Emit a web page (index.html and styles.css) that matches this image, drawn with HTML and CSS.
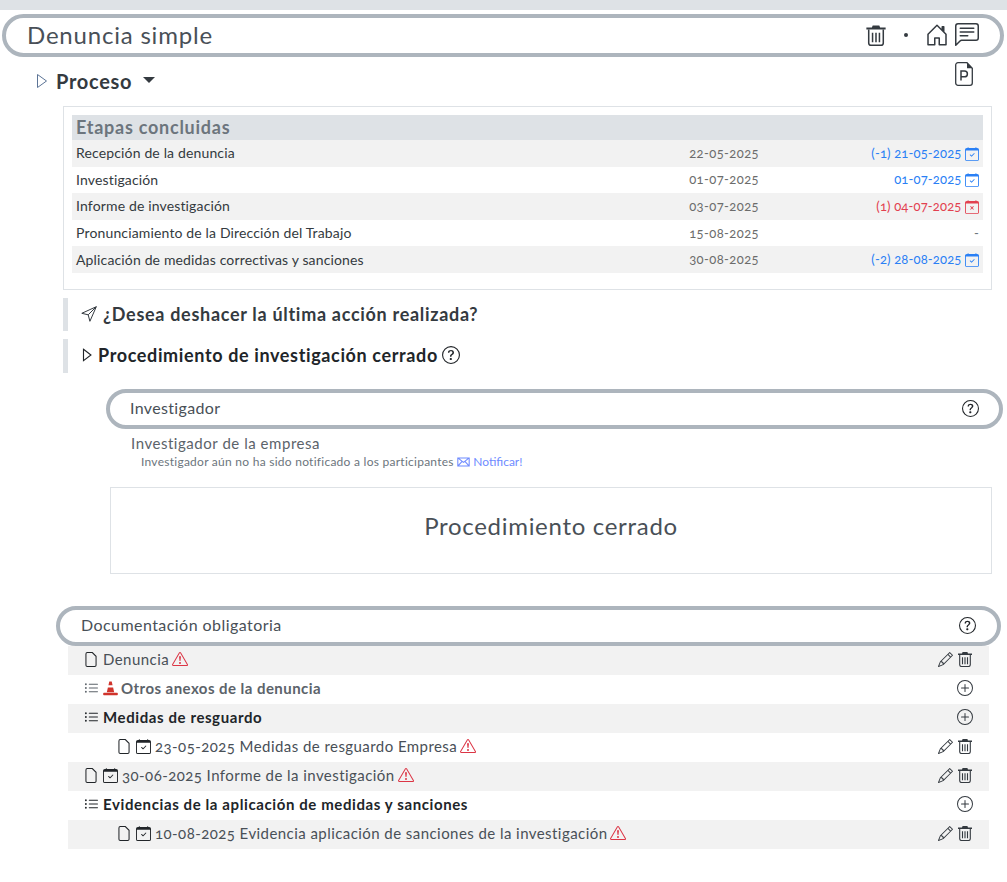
FILE: index.html
```html
<!DOCTYPE html>
<html lang="es">
<head>
    <meta charset="UTF-8">
    <title>Denuncia simple</title>
    <link rel="stylesheet" href="styles.css">
</head>
<body>
    <svg width="0" height="0" class="defs">
        <symbol id="trash" viewBox="0 0 16 16"><path fill="currentColor" d="M1 2.500h14V4H1zM5 2.500l.6-1.500h4.800l.6 1.500z"/><path fill="none" stroke="currentColor" stroke-width="1.100" d="M2.700 4v9.800A1.700 1.700 0 0 0 4.400 15.500h7.200a1.700 1.700 0 0 0 1.700-1.700V4M5.500 6.300v7M8 6.300v7M10.500 6.300v7"/></symbol>
        <symbol id="pencil" viewBox="0 0 16 16"><path fill="currentColor" d="M12.146.146a.5.5 0 0 1 .708 0l3 3a.5.5 0 0 1 0 .708l-10 10a.5.5 0 0 1-.168.11l-5 2a.5.5 0 0 1-.65-.65l2-5a.5.5 0 0 1 .11-.168l10-10zM11.207 2.500 13.500 4.793 14.793 3.500 12.500 1.207 11.207 2.500zm1.586 3L10.500 3.207 4 9.707V10h.5a.5.5 0 0 1 .5.5v.5h.5a.5.5 0 0 1 .5.5v.5h.293l6.500-6.500zm-9.761 5.175-.106.106-1.528 3.821 3.821-1.528.106-.106A.5.5 0 0 1 5 12.500V12h-.5a.5.5 0 0 1-.5-.5V11h-.5a.5.5 0 0 1-.468-.325z"/></symbol>
        <symbol id="plus" viewBox="0 0 16 16"><path fill="currentColor" d="M8 15A7 7 0 1 1 8 1a7 7 0 0 1 0 14zm0 1A8 8 0 1 0 8 0a8 8 0 0 0 0 16z"/><path fill="currentColor" d="M8 4a.5.5 0 0 1 .5.5v3h3a.5.5 0 0 1 0 1h-3v3a.5.5 0 0 1-1 0v-3h-3a.5.5 0 0 1 0-1h3v-3A.5.5 0 0 1 8 4z"/></symbol>
        <symbol id="file" viewBox="2 0 12 16"><path fill="none" stroke="currentColor" stroke-width="1.100" d="M4 .6h5.400l4 4V14a1.400 1.400 0 0 1-1.400 1.400H4A1.400 1.400 0 0 1 2.600 14V2A1.400 1.400 0 0 1 4 .6z"/></symbol>
        <symbol id="warn" viewBox="0 0 16 16"><path fill="currentColor" d="M7.938 2.016A.13.13 0 0 1 8.002 2a.13.13 0 0 1 .063.016.146.146 0 0 1 .054.057l6.857 11.667c.036.06.035.124.002.183a.163.163 0 0 1-.054.06.116.116 0 0 1-.066.017H1.146a.115.115 0 0 1-.066-.017.163.163 0 0 1-.054-.06.176.176 0 0 1 .002-.183L7.884 2.073a.147.147 0 0 1 .054-.057zm1.044-.45a1.130 1.130 0 0 0-1.960 0L.165 13.233c-.457.778.091 1.767.98 1.767h13.713c.889 0 1.438-.99.98-1.767L8.982 1.566z"/><path fill="currentColor" d="M7.002 12a1 1 0 1 1 2 0 1 1 0 0 1-2 0zM7.100 5.995a.905.905 0 1 1 1.800 0l-.35 3.507a.552.552 0 0 1-1.100 0L7.100 5.995z"/></symbol>
        <symbol id="list" viewBox="0 0 16 16"><path fill="currentColor" d="M5 11.500a.5.5 0 0 1 .5-.5h9a.5.5 0 0 1 0 1h-9a.5.5 0 0 1-.5-.5zm0-4a.5.5 0 0 1 .5-.5h9a.5.5 0 0 1 0 1h-9a.5.5 0 0 1-.5-.5zm0-4a.5.5 0 0 1 .5-.5h9a.5.5 0 0 1 0 1h-9a.5.5 0 0 1-.5-.5zm-3 1a1 1 0 1 0 0-2 1 1 0 0 0 0 2zm0 4a1 1 0 1 0 0-2 1 1 0 0 0 0 2zm0 4a1 1 0 1 0 0-2 1 1 0 0 0 0 2z"/></symbol>
        <symbol id="cal" viewBox="0 0 16 16"><path fill="currentColor" d="M10.854 7.146a.5.5 0 0 1 0 .708l-3 3a.5.5 0 0 1-.708 0l-1.500-1.500a.5.5 0 1 1 .708-.708L7.500 9.793l2.646-2.647a.5.5 0 0 1 .708 0z"/><path fill="currentColor" d="M3.500 0a.5.5 0 0 1 .5.5V1h8V.5a.5.5 0 0 1 1 0V1h1a2 2 0 0 1 2 2v11a2 2 0 0 1-2 2H2a2 2 0 0 1-2-2V3a2 2 0 0 1 2-2h1V.5a.5.5 0 0 1 .5-.5zM1 4v10a1 1 0 0 0 1 1h12a1 1 0 0 0 1-1V4H1z"/></symbol>
        <symbol id="calx" viewBox="0 0 16 16"><path fill="currentColor" d="M6.146 7.146a.5.5 0 0 1 .708 0L8 8.293l1.146-1.147a.5.5 0 1 1 .708.708L8.707 9l1.147 1.146a.5.5 0 0 1-.708.708L8 9.707l-1.146 1.147a.5.5 0 0 1-.708-.708L7.293 9 6.146 7.854a.5.5 0 0 1 0-.708z"/><path fill="currentColor" d="M3.500 0a.5.5 0 0 1 .5.5V1h8V.5a.5.5 0 0 1 1 0V1h1a2 2 0 0 1 2 2v11a2 2 0 0 1-2 2H2a2 2 0 0 1-2-2V3a2 2 0 0 1 2-2h1V.5a.5.5 0 0 1 .5-.5zM1 4v10a1 1 0 0 0 1 1h12a1 1 0 0 0 1-1V4H1z"/></symbol>
        <symbol id="help" viewBox="0 0 16 16"><path fill="currentColor" d="M8 15A7 7 0 1 1 8 1a7 7 0 0 1 0 14zm0 1A8 8 0 1 0 8 0a8 8 0 0 0 0 16z"/><path fill="currentColor" d="M5.255 5.786a.237.237 0 0 0 .241.247h.825c.138 0 .248-.113.266-.25.09-.656.54-1.134 1.342-1.134.686 0 1.314.343 1.314 1.168 0 .635-.374.927-.965 1.371-.673.489-1.206 1.060-1.168 1.987l.003.217a.25.25 0 0 0 .25.246h.811a.25.25 0 0 0 .25-.25v-.105c0-.718.273-.927 1.010-1.486.609-.463 1.244-.977 1.244-2.056 0-1.511-1.276-2.241-2.673-2.241-1.267 0-2.655.59-2.750 2.286zm1.557 5.763c0 .533.425.927 1.010.927.609 0 1.028-.394 1.028-.927 0-.552-.42-.94-1.029-.94-.584 0-1.009.388-1.009.94z"/></symbol>
    </svg>

    <div class="topbar"></div>

    <header class="pill pill-main">
        <h1>Denuncia simple</h1>
        <div class="main-icons">
            <svg class="ic-trash"><use href="#trash"/></svg>
            <span class="dot"></span>
            <svg class="ic-home" viewBox="0 0 16 16"><path fill="currentColor" d="M8.354 1.146a.5.5 0 0 0-.708 0l-6 6A.5.5 0 0 0 1.500 7.500v7a.5.5 0 0 0 .5.5h4.500a.5.5 0 0 0 .5-.5v-4h2v4a.5.5 0 0 0 .5.5H14a.5.5 0 0 0 .5-.5v-7a.5.5 0 0 0-.146-.354L13 5.793V2.500a.5.5 0 0 0-.5-.5h-1a.5.5 0 0 0-.5.5v1.293L8.354 1.146zM2.500 14V7.707l5.500-5.500 5.500 5.500V14H10v-4a.5.5 0 0 0-.5-.5h-3a.5.5 0 0 0-.5.5v4H2.500z"/></svg>
            <svg class="ic-chat" viewBox="0 0 16 16"><path fill="currentColor" d="M14 1a1 1 0 0 1 1 1v8a1 1 0 0 1-1 1H4.414A2 2 0 0 0 3 11.586l-2 2V2a1 1 0 0 1 1-1h12zM2 0a2 2 0 0 0-2 2v12.793a.5.5 0 0 0 .854.353l2.853-2.853A1 1 0 0 1 4.414 12H14a2 2 0 0 0 2-2V2a2 2 0 0 0-2-2H2z"/><path fill="currentColor" d="M3 3.500a.5.5 0 0 1 .5-.5h9a.5.5 0 0 1 0 1h-9a.5.5 0 0 1-.5-.5zM3 6a.5.5 0 0 1 .5-.5h9a.5.5 0 0 1 0 1h-9A.5.5 0 0 1 3 6zm0 2.500a.5.5 0 0 1 .5-.5h5a.5.5 0 0 1 0 1h-5a.5.5 0 0 1-.5-.5z"/></svg>
        </div>
    </header>

    <div class="proceso-row">
        <svg class="tri" viewBox="0 0 12 16"><path fill="none" stroke="#5c7496" d="M1.500 1.500l9 6.500-9 6.500z"/></svg>
        <span class="proceso">Proceso</span>
        <span class="caret"></span>
        <svg class="ic-pfile" viewBox="0 0 18 24"><path fill="none" stroke="currentColor" stroke-width="1.300" d="M3 .7h9l5.300 5.500V21a2.300 2.300 0 0 1-2.300 2.300H3A2.300 2.300 0 0 1 .7 21V3A2.300 2.300 0 0 1 3 .7z"/><path fill="currentColor" d="M12 .7v5.500h5.300z"/><path fill="none" stroke="currentColor" stroke-width="1.500" d="M6 18.500V9h3.500a2.800 2.800 0 0 1 0 5.800H6"/></svg>
    </div>

    <section class="etapas">
        <h3>Etapas concluidas</h3>
        <div class="etapa">
            <span class="e-name">Recepción de la denuncia</span><span class="e-date">22-05-2025</span>
            <span class="e-end blue">(-1) 21-05-2025 <svg><use href="#cal"/></svg></span>
        </div>
        <div class="etapa">
            <span class="e-name">Investigación</span><span class="e-date">01-07-2025</span>
            <span class="e-end blue">01-07-2025 <svg><use href="#cal"/></svg></span>
        </div>
        <div class="etapa">
            <span class="e-name">Informe de investigación</span><span class="e-date">03-07-2025</span>
            <span class="e-end red">(1) 04-07-2025 <svg><use href="#calx"/></svg></span>
        </div>
        <div class="etapa">
            <span class="e-name">Pronunciamiento de la Dirección del Trabajo</span><span class="e-date">15-08-2025</span>
            <span class="e-end">-</span>
        </div>
        <div class="etapa">
            <span class="e-name">Aplicación de medidas correctivas y sanciones</span><span class="e-date">30-08-2025</span>
            <span class="e-end blue">(-2) 28-08-2025 <svg><use href="#cal"/></svg></span>
        </div>
    </section>

    <div class="accion">
        <svg class="ic-send" viewBox="0 0 16 16"><path fill="none" stroke="currentColor" d="M15.300.7L.8 7.300l6.400 1.500 1.700 6.500zM7.200 8.800L15.300.7"/></svg>
        <span>¿Desea deshacer la última acción realizada?</span>
    </div>
    <div class="accion accion-dark">
        <svg class="ic-tri" viewBox="0 0 12 16"><path fill="none" stroke="currentColor" stroke-width="1.300" d="M2 1.500l8.500 6.500L2 14.500z"/></svg>
        <span>Procedimiento de investigación cerrado</span>
        <svg class="ic-help"><use href="#help"/></svg>
    </div>

    <div class="pill pill-inv">
        <span class="pill-text">Investigador</span>
        <svg class="ic-help"><use href="#help"/></svg>
    </div>
    <div class="inv-info">
        <p class="inv-name">Investigador de la empresa</p>
        <p class="inv-note">Investigador aún no ha sido notificado a los participantes
            <a class="notif"><svg viewBox="0 0 16 12"><path fill="none" stroke="currentColor" stroke-width="1.300" d="M1 1h14v10H1zM1 1l7 5.500L15 1M1 11l5-5.500M15 11l-5-5.500"/></svg> Notificar!</a>
        </p>
    </div>
    <div class="cerrado">Procedimiento cerrado</div>

    <div class="pill pill-doc">
        <span class="pill-text">Documentación obligatoria</span>
        <svg class="ic-help"><use href="#help"/></svg>
    </div>

    <section class="docs">
        <div class="doc">
            <div class="doc-left"><svg class="file"><use href="#file"/></svg>Denuncia<svg class="warn"><use href="#warn"/></svg></div>
            <div class="doc-right"><svg class="pen"><use href="#pencil"/></svg><svg><use href="#trash"/></svg></div>
        </div>
        <div class="doc">
            <div class="doc-left"><svg class="list muted-ic"><use href="#list"/></svg>
                <svg class="cone" viewBox="0 0 16 16"><path fill="#d0342c" d="M6.700 .5h2.600l.9 4H5.800zM5.200 7h5.600l1.100 5H4.100z"/><path fill="#d0342c" d="M1 12.500h14a.8.8 0 0 1 .8.8v1a.8.8 0 0 1-.8.8H1a.8.8 0 0 1-.8-.8v-1a.8.8 0 0 1 .8-.8z"/></svg>
                <b class="muted">Otros anexos de la denuncia</b></div>
            <div class="doc-right"><svg class="plus"><use href="#plus"/></svg></div>
        </div>
        <div class="doc">
            <div class="doc-left"><svg class="list"><use href="#list"/></svg><b>Medidas de resguardo</b></div>
            <div class="doc-right"><svg class="plus"><use href="#plus"/></svg></div>
        </div>
        <div class="doc sub">
            <div class="doc-left"><svg class="file"><use href="#file"/></svg><svg class="cal"><use href="#cal"/></svg>23-05-2025 Medidas de resguardo Empresa<svg class="warn"><use href="#warn"/></svg></div>
            <div class="doc-right"><svg class="pen"><use href="#pencil"/></svg><svg><use href="#trash"/></svg></div>
        </div>
        <div class="doc">
            <div class="doc-left"><svg class="file"><use href="#file"/></svg><svg class="cal"><use href="#cal"/></svg>30-06-2025 Informe de la investigación<svg class="warn"><use href="#warn"/></svg></div>
            <div class="doc-right"><svg class="pen"><use href="#pencil"/></svg><svg><use href="#trash"/></svg></div>
        </div>
        <div class="doc">
            <div class="doc-left"><svg class="list"><use href="#list"/></svg><b>Evidencias de la aplicación de medidas y sanciones</b></div>
            <div class="doc-right"><svg class="plus"><use href="#plus"/></svg></div>
        </div>
        <div class="doc sub">
            <div class="doc-left"><svg class="file"><use href="#file"/></svg><svg class="cal"><use href="#cal"/></svg>10-08-2025 Evidencia aplicación de sanciones de la investigación<svg class="warn"><use href="#warn"/></svg></div>
            <div class="doc-right"><svg class="pen"><use href="#pencil"/></svg><svg><use href="#trash"/></svg></div>
        </div>
    </section>
</body>
</html>
```

FILE: styles.css
```css
body {
    font-family: Lato, "Open Sans", sans-serif;
    font-variant-numeric: oldstyle-nums;
    margin: 0;
    color: #3b3f45;
    background-color: #fff;
    height: 882px;
    overflow: hidden;
}
.defs {
    position: absolute;
}
svg {
    width: 16px;
    height: 16px;
    vertical-align: -3px;
    flex: none;
}
.topbar {
    height: 10px;
    background-color: #dee2e6;
}
.pill {
    display: flex;
    align-items: center;
    justify-content: space-between;
    border: 4px solid #adb5bd;
    border-radius: 22px;
    box-sizing: border-box;
    background-color: #fff;
}
.pill-main {
    height: 43px;
    margin: 4px 3px 0 2px;
    padding: 0 21px;
}
h1 {
    font-size: 24px;
    font-weight: 400;
    margin: 0 0 3px;
    color: #495057;
    letter-spacing: .8px;
}
.main-icons {
    display: flex;
    align-items: center;
    color: #343a40;
    margin-bottom: 2px;
}
.ic-trash {
    width: 22px;
    height: 24px;
}
.dot {
    width: 4px;
    height: 4px;
    border-radius: 50%;
    background-color: #343a40;
    margin: 0 17px;
}
.ic-home {
    width: 24px;
    height: 24px;
}
.ic-chat {
    width: 24px;
    height: 24px;
    margin-left: 6px;
}
.proceso-row {
    display: flex;
    align-items: center;
    height: 38px;
    padding: 5px 34px 6px 36px;
}
.tri {
    width: 12px;
    height: 16px;
}
.proceso {
    font-size: 20px;
    font-weight: 700;
    margin-left: 8px;
    color: #343a40;
    letter-spacing: .7px;
}
.caret {
    border-top: 6px solid #343a40;
    border-left: 6px solid transparent;
    border-right: 6px solid transparent;
    margin-left: 11px;
    margin-bottom: 2px;
}
.ic-pfile {
    align-self: flex-start;
    margin-left: auto;
    width: 18px;
    height: 24px;
    color: #343a40;
}
.etapas {
    margin: 0 15px 0 63px;
    border: 1px solid #dee2e6;
    padding: 8px;
    height: 184px;
    box-sizing: border-box;
}
.etapas h3 {
    margin: 0;
    height: 25px;
    line-height: 25px;
    font-size: 18px;
    font-weight: 700;
    color: #6c757d;
    background-color: #dee2e6;
    padding-left: 4px;
    letter-spacing: .75px;
}
.etapa {
    display: flex;
    align-items: center;
    height: 26.6px;
    box-sizing: border-box;
    font-size: 14px;
    padding: 0 4px 1px;
    color: #343a40;
}
.etapa:nth-of-type(odd) {
    background-color: #f2f2f2;
}
.e-name {
    width: 593px;
    letter-spacing: .15px;
}
.e-date {
    width: 90px;
    text-align: right;
    font-size: 13px;
    color: #6c6c6c;
    letter-spacing: .4px;
}
.e-end {
    flex: 1;
    text-align: right;
    font-size: 13px;
    color: #6c757d;
    letter-spacing: .15px;
}
.e-end svg {
    width: 14px;
    height: 14px;
}
.blue {
    color: #2a80f5;
}
.red {
    color: #e2404f;
}
.accion {
    display: flex;
    align-items: center;
    margin: 8px 0 0 63px;
    border-left: 5px solid #dee2e6;
    height: 33px;
    box-sizing: border-box;
    padding: 0 0 2px 13px;
    font-size: 18px;
    font-weight: 700;
    color: #343a40;
    gap: 6px;
    letter-spacing: .7px;
}
.accion-dark {
    color: #212529;
    height: 34px;
    gap: 4px;
    letter-spacing: .63px;
}
.ic-send {
    width: 16px;
    height: 16px;
}
.ic-tri {
    width: 12px;
    height: 14px;
    margin-right: 1px;
}
.ic-help {
    width: 17px;
    height: 17px;
    color: #212529;
}
.accion .ic-help {
    width: 18px;
    height: 18px;
}
.pill-text {
    margin-bottom: 2px;
}
.pill-inv {
    height: 40px;
    margin: 16px 4px 0 106px;
    padding: 0 20px 2px;
    font-size: 16px;
    color: #495057;
    letter-spacing: .35px;
}
.inv-info {
    margin: 5px 0 0 131px;
}
.inv-info p {
    margin: 0;
}
.inv-name {
    font-size: 15px;
    line-height: 18px;
    color: #5c636a;
    letter-spacing: .54px;
}
.inv-note {
    font-size: 12px;
    line-height: 16px;
    margin: 2px 0 0 10px !important;
    color: #6c757d;
    letter-spacing: .26px;
}
.notif {
    color: #6f8bff;
    letter-spacing: 0;
}
.notif svg {
    width: 13px;
    height: 10px;
    vertical-align: -1px;
}
.cerrado {
    margin: 17px 15px 0 110px;
    height: 87px;
    padding-bottom: 10px;
    border: 1px solid #dee2e6;
    display: flex;
    align-items: center;
    justify-content: center;
    font-size: 24px;
    color: #495057;
    box-sizing: border-box;
    letter-spacing: .7px;
}
.pill-doc {
    height: 40px;
    margin: 32px 6px 0 56px;
    padding: 0 21px 2px;
    font-size: 16px;
    color: #495057;
    letter-spacing: .44px;
}
.docs {
    margin: 0 18px 0 68px;
}
.doc {
    display: flex;
    align-items: center;
    justify-content: space-between;
    height: 29px;
    box-sizing: border-box;
    padding: 0 16px 3px 17px;
    font-size: 15px;
    color: #495057;
    letter-spacing: .44px;
}
.doc:nth-child(odd) {
    background-color: #f2f2f2;
}
.doc.sub .doc-left {
    padding-left: 33px;
}
.doc-left {
    display: flex;
    align-items: center;
    gap: 4px;
}
.doc b {
    color: #212529;
    letter-spacing: .6px;
}
.doc b.muted {
    color: #5c636a;
    letter-spacing: .45px;
}
.doc-right {
    color: #343a40;
    display: flex;
    align-items: center;
    gap: 4px;
}
.file {
    width: 12px;
    height: 15px;
    margin-right: 2px;
    color: #212529;
}
.cal {
    width: 15px;
    height: 15px;
    color: #212529;
}
.warn {
    color: #dc3545;
    margin-left: -1px;
}
.list {
    width: 15px;
    height: 15px;
    color: #212529;
    margin-left: -1px;
}
.muted-ic {
    color: #5c636a;
}
.cone {
    width: 15px;
    height: 15px;
    margin-right: -1px;
}
.pen {
    width: 15px;
    height: 15px;
}
```
